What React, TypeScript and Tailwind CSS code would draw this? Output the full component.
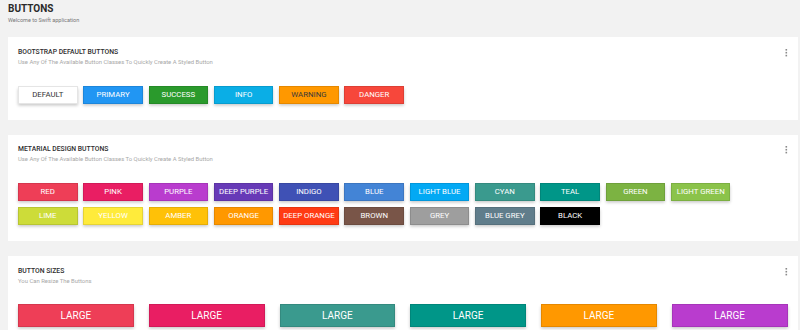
import React from "react";

type Btn = { label: string; bg: string; text?: string };

const bootstrap: Btn[] = [
  { label: "DEFAULT", bg: "bg-white", text: "text-[#333]" },
  { label: "PRIMARY", bg: "bg-[#2196f3]" },
  { label: "SUCCESS", bg: "bg-[#2a9a2c]" },
  { label: "INFO", bg: "bg-[#0aaee6]" },
  { label: "WARNING", bg: "bg-[#ff9800]", text: "text-[#3a3a3a]" },
  { label: "DANGER", bg: "bg-[#f7473b]" },
];

const material: Btn[] = [
  { label: "RED", bg: "bg-[#ee3e57]" },
  { label: "PINK", bg: "bg-[#e91e63]" },
  { label: "PURPLE", bg: "bg-[#b93cce]" },
  { label: "DEEP PURPLE", bg: "bg-[#673ab7]" },
  { label: "INDIGO", bg: "bg-[#3f51b5]" },
  { label: "BLUE", bg: "bg-[#4384d6]" },
  { label: "LIGHT BLUE", bg: "bg-[#03a9f4]" },
  { label: "CYAN", bg: "bg-[#3a9a8e]" },
  { label: "TEAL", bg: "bg-[#009688]" },
  { label: "GREEN", bg: "bg-[#7cb342]" },
  { label: "LIGHT GREEN", bg: "bg-[#8bc34a]" },
  { label: "LIME", bg: "bg-[#cddc39]" },
  { label: "YELLOW", bg: "bg-[#ffeb3b]" },
  { label: "AMBER", bg: "bg-[#ffc107]" },
  { label: "ORANGE", bg: "bg-[#ff9800]" },
  { label: "DEEP ORANGE", bg: "bg-[#ff3b14]" },
  { label: "BROWN", bg: "bg-[#795548]" },
  { label: "GREY", bg: "bg-[#9e9e9e]" },
  { label: "BLUE GREY", bg: "bg-[#607d8b]" },
  { label: "BLACK", bg: "bg-black" },
];

const large: Btn[] = [
  { label: "LARGE", bg: "bg-[#ee3e57]" },
  { label: "LARGE", bg: "bg-[#e91e63]" },
  { label: "LARGE", bg: "bg-[#3a9a8e]" },
  { label: "LARGE", bg: "bg-[#009688]" },
  { label: "LARGE", bg: "bg-[#ff9800]" },
  { label: "LARGE", bg: "bg-[#b93cce]" },
];

function Kebab() {
  return (
    <svg width="3" height="8" viewBox="0 0 3 8" className="mt-[1px] mr-[-0.5px]">
      <rect x="0.5" y="0" width="1.6" height="1.6" fill="#8a8a8a" />
      <rect x="0.5" y="2.9" width="1.6" height="1.6" fill="#8a8a8a" />
      <rect x="0.5" y="5.8" width="1.6" height="1.6" fill="#8a8a8a" />
    </svg>
  );
}

function SmallButton({ b }: { b: Btn }) {
  return (
    <button
      className={`${b.bg} ${b.text ?? "text-white"} w-[59.5px] h-[18px] flex items-center justify-center text-[7.8px] leading-none font-normal border border-black/10 shadow-[0_1.5px_3px_rgba(0,0,0,0.22)] whitespace-nowrap`}
    >
      {b.label}
    </button>
  );
}

function Card({
  title,
  subtitle,
  children,
  pb,
}: {
  title: string;
  subtitle: string;
  children: React.ReactNode;
  pb: string;
}) {
  return (
    <div className={`bg-white px-[10px] pt-[10.5px] ${pb}`}>
      <div className="flex items-start justify-between">
        <div className="text-[6.8px] leading-[9px] font-medium text-[#2e2e2e]">
          {title}
        </div>
        <Kebab />
      </div>
      <div className="mt-[2px] text-[5.9px] leading-[7px] text-[#a8a8a8]">{subtitle}</div>
      {children}
    </div>
  );
}

export default function App() {
  return (
    <div
      className="w-[800px] h-[330px] overflow-hidden bg-[#f2f2f2] pl-[8px] pr-[2.5px]"
      style={{ fontFamily: "Roboto, 'Liberation Sans', sans-serif" }}
    >
      <div className="h-[37px] pt-[3px]">
        <div className="text-[10px] leading-[12px] font-bold text-[#2a2a2a]">
          BUTTONS
        </div>
        <div className="mt-[1.8px] text-[5.5px] leading-[7px] text-[#777]">
          Welcome to Swift application
        </div>
      </div>

      <div className="flex flex-col gap-[15px]">
        <Card
          title="BOOTSTRAP DEFAULT BUTTONS"
          subtitle="Use Any Of The Available Button Classes To Quickly Create A Styled Button"
          pb="pb-[15.5px]"
        >
          <div className="mt-[20.5px] flex gap-[5.8px]">
            {bootstrap.map((b) => (
              <SmallButton key={b.label} b={b} />
            ))}
          </div>
        </Card>

        <Card
          title="METARIAL DESIGN BUTTONS"
          subtitle="Use Any Of The Available Button Classes To Quickly Create A Styled Button"
          pb="pb-[16px]"
        >
          <div className="mt-[20px] flex flex-wrap gap-x-[5.8px] gap-y-[6px] w-[720px]">
            {material.map((b) => (
              <SmallButton key={b.label} b={b} />
            ))}
          </div>
        </Card>

        <Card title="BUTTON SIZES" subtitle="You Can Resize The Buttons" pb="pb-[16px]">
          <div className="mt-[19.5px] grid grid-cols-6 gap-[15px]">
            {large.map((b, i) => (
              <button
                key={i}
                className={`${b.bg} text-white h-[23px] flex items-center justify-center text-[10px] leading-none font-normal border border-black/10 shadow-[0_1.5px_3px_rgba(0,0,0,0.22)]`}
              >
                {b.label}
              </button>
            ))}
          </div>
        </Card>
      </div>
    </div>
  );
}
